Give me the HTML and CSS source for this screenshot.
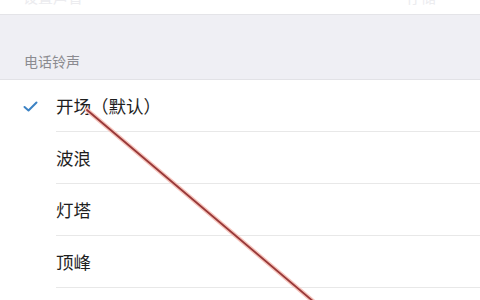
FILE: index.html
```html
<!DOCTYPE html>
<html>
<head>
<meta charset="utf-8">
<link rel="stylesheet" href="styles.css">
</head>
<body>
<div class="topbar">
  <span class="top-left">设置声音</span>
  <span class="top-right">存储</span>
</div>
<div class="section">
  <div class="section-title">电话铃声</div>
</div>
<ul class="list">
  <li class="row">
    <span class="mark">
      <svg width="15" height="11" viewBox="0 0 15 11"><path d="M1.5 6 L5.5 9.5 L13.5 1.5" fill="none" stroke="#3b82c4" stroke-width="2" stroke-linecap="round" stroke-linejoin="round"/></svg>
    </span>
    <span class="label">开场（默认）</span>
  </li>
  <li class="row"><span class="mark"></span><span class="label">波浪</span></li>
  <li class="row"><span class="mark"></span><span class="label">灯塔</span></li>
  <li class="row"><span class="mark"></span><span class="label">顶峰</span></li>
  <li class="row"><span class="mark"></span><span class="label"></span></li>
</ul>
<svg class="arrow" width="480" height="300" viewBox="0 0 480 300">
  <line x1="87" y1="110" x2="314" y2="302" stroke="#f6c4bc" stroke-width="4.5" stroke-linecap="round"/>
  <line x1="87" y1="110" x2="314" y2="302" stroke="#983838" stroke-width="1.8" stroke-linecap="round"/>
</svg>
</body>
</html>
```
FILE: styles.css
```css
html, body {
  margin: 0;
  padding: 0;
  background: #ffffff;
  overflow: hidden;
}
body {
  font-family: "Noto Sans CJK SC", "Noto Sans", sans-serif;
  width: 480px;
  height: 300px;
  position: relative;
}
.topbar {
  height: 14px;
  background: #ffffff;
  border-bottom: 1px solid #e4e4e8;
  display: flex;
  justify-content: space-between;
  overflow: hidden;
}
.top-left, .top-right {
  font-size: 15px;
  line-height: 15px;
  color: #ececef;
  margin-top: -11px;
}
.top-left { margin-left: 23px; }
.top-right { margin-right: 44px; }
.section {
  height: 64px;
  background: #efeff4;
  border-bottom: 1px solid #e2e2e6;
  display: flex;
  align-items: flex-end;
}
.section-title {
  font-size: 14px;
  line-height: 16px;
  color: #8b8b90;
  margin-left: 24px;
  margin-bottom: 10px;
}
.list {
  list-style: none;
  margin: 0;
  padding: 0;
}
.row {
  display: flex;
  height: 52px;
}
.mark {
  width: 57px;
  flex: none;
  display: flex;
  align-items: center;
  padding-left: 23px;
  box-sizing: border-box;
}
.label {
  flex: 1;
  display: flex;
  align-items: center;
  font-size: 17.5px;
  color: #1e1e1e;
  border-bottom: 1px solid #e8e8e8;
  margin-left: -1px;
}
.arrow {
  position: absolute;
  left: 0;
  top: 0;
}
```
